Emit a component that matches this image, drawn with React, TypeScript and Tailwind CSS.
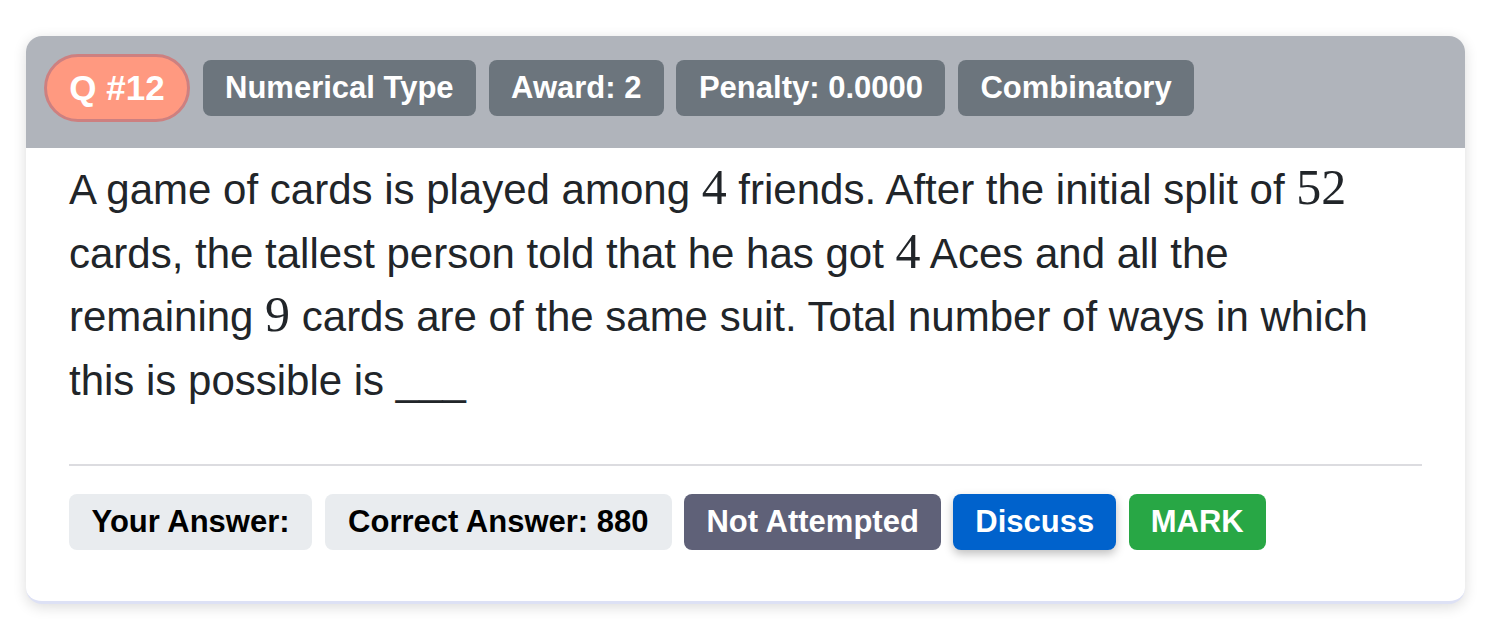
const tags = ["Numerical Type", "Award: 2", "Penalty: 0.0000", "Combinatory"];

function M({ children }: { children: React.ReactNode }) {
  return <span className="font-['Liberation_Serif',serif] text-[50px] leading-none">{children}</span>;
}

export default function App() {
  return (
    <div className="min-h-screen bg-white pt-[36px] pl-[26px] pr-[40px] font-['Liberation_Sans',Arial,sans-serif]">
      <div className="rounded-[16px] bg-white shadow-[0_3px_14px_rgba(0,0,0,0.14)] border-b-[3px] border-[#dde1f5] overflow-hidden">
        <div className="flex items-center gap-[12.5px] bg-[#b0b4bb] pt-[18px] pb-[26px] px-[18px]">
          <span className="flex h-[68px] w-[146px] items-center justify-center rounded-full border-[3px] border-[#cd8080] bg-[#ff9980] text-[35px] font-bold text-white">
            Q #12
          </span>
          {tags.map((t) => (
            <span key={t} className="flex h-[56px] items-center rounded-[8px] bg-[#6c757d] px-[22.5px] text-[31px] font-bold text-white">
              {t}
            </span>
          ))}
        </div>

        <div className="px-[43px] pt-[10px] pb-[51px]">
          <p className="text-[42px] leading-[63.5px] text-[#212529]">
            A game of cards is played among <M>4</M> friends. After the initial split of <M>52</M> cards, the
            tallest person told that he has got <M>4</M> Aces and all the remaining <M>9</M> cards are of the same
            suit. Total number of ways in which this is possible is ___
          </p>
          <div className="mt-[52px] border-t-2 border-[#dcdce0]" />
          <div className="mt-[28px] flex items-center gap-[12.5px] text-[31px] font-bold">
            <span className="flex h-[56px] items-center rounded-[8px] bg-[#e9ecef] px-[22.5px] text-black">Your Answer:</span>
            <span className="flex h-[56px] items-center rounded-[8px] bg-[#e9ecef] px-[23.5px] text-black">Correct Answer: 880</span>
            <span className="flex h-[56px] items-center rounded-[8px] bg-[#5f6178] px-[22px] text-white">Not Attempted</span>
            <span className="flex h-[56px] items-center rounded-[8px] bg-[#0062cc] px-[22px] text-white shadow-[0_4px_10px_rgba(0,0,0,0.25)]">Discuss</span>
            <span className="flex h-[56px] items-center rounded-[8px] bg-[#28a745] px-[22px] text-white">MARK</span>
          </div>
        </div>
      </div>
    </div>
  );
}
